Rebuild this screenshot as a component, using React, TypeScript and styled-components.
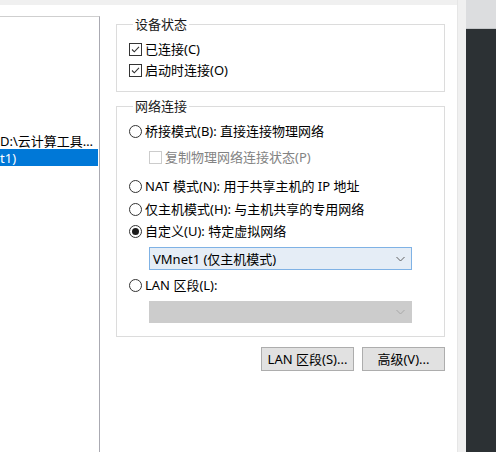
import { FC, ReactNode } from "react"
import styled, { createGlobalStyle } from "styled-components"

const GlobalStyle = createGlobalStyle`
  html, body {
    margin: 0;
    padding: 0;
    background: #ffffff;
  }
  body {
    font-family: "Noto Sans", "Noto Sans CJK SC", sans-serif;
    font-size: 13px;
    line-height: 16px;
    color: #000000;
  }
  * {
    box-sizing: border-box;
  }
`

const Screen = styled.div`
  display: flex;
  width: 496px;
  height: 452px;
  overflow: hidden;
`

const Dialog = styled.div`
  display: flex;
  flex-direction: column;
  width: 457px;
  background: #ffffff;
  border-top: 5px solid #f0f0f0;
`

const Gutter = styled.div`
  width: 9px;
  background: #f0f0f0;
  border-left: 1px solid #e6e6e6;
`

const Desktop = styled.div`
  flex: 1;
  display: flex;
  flex-direction: column;
  background: #2c3134;
`

const DesktopTop = styled.div`
  height: 29px;
  background: #dcdddf;
  border-bottom: 1px solid #c4c6c8;
`

const Body = styled.div`
  flex: 1;
  display: flex;
`

const ListBox = styled.div`
  width: 100px;
  margin-top: 11px;
  padding-top: 116px;
  border-top: 1px solid #cfcfcf;
  border-right: 1px solid #aaaab2;
  overflow: hidden;
`

const ListRow = styled.div<{ $selected?: boolean }>`
  display: flex;
  align-items: center;
  height: ${(p) => (p.$selected ? 17 : 16)}px;
  width: 98px;
  white-space: nowrap;
  overflow: hidden;
  line-height: 14px;
  color: ${(p) => (p.$selected ? "#ffffff" : "#000000")};
  background: ${(p) => (p.$selected ? "#0078d7" : "transparent")};
`

const Settings = styled.div`
  flex: 1;
  display: flex;
  flex-direction: column;
  padding: 11px 12px 0 16px;
`

const Group = styled.fieldset<{ $top?: number; $bottom?: number }>`
  margin: ${(p) => p.$top ?? 0}px 0 0 0;
  padding: 6px 0 ${(p) => p.$bottom ?? 10}px 12px;
  border: 1px solid #dcdcdc;
  min-width: 0;
`

const Legend = styled.legend`
  margin-left: 4px;
  padding: 0 2px;
  line-height: 16px;
  color: #1a1a1a;
`

const Row = styled.div<{ $top?: number; $indent?: number; $disabled?: boolean }>`
  display: flex;
  align-items: center;
  height: 22px;
  margin-top: ${(p) => p.$top ?? 0}px;
  margin-left: ${(p) => p.$indent ?? 0}px;
  color: ${(p) => (p.$disabled ? "#838383" : "#000000")};
  white-space: nowrap;
`

const Box = styled.span<{ $disabled?: boolean }>`
  display: inline-flex;
  width: 13px;
  height: 13px;
  flex: none;
  border: 1px solid ${(p) => (p.$disabled ? "#cccccc" : "#333333")};
  background: #ffffff;
`

const Radio = styled.span<{ $checked?: boolean }>`
  position: relative;
  display: inline-block;
  width: 13px;
  height: 13px;
  flex: none;
  border: 1px solid #333333;
  border-radius: 50%;
  background: #ffffff;

  &::after {
    content: "";
    display: ${(p) => (p.$checked ? "block" : "none")};
    position: absolute;
    top: 2px;
    left: 2px;
    width: 7px;
    height: 7px;
    border-radius: 50%;
    background: #1c1c1c;
  }
`

const Label = styled.span`
  margin-left: 3px;
`

const Select = styled.div<{ $disabled?: boolean; $top?: number }>`
  display: flex;
  align-items: center;
  justify-content: space-between;
  width: 263px;
  height: ${(p) => (p.$disabled ? 22 : 23)}px;
  margin: ${(p) => p.$top ?? 0}px 0 0 20px;
  padding: 0 6px 0 3px;
  background: ${(p) => (p.$disabled ? "#cccccc" : "#e5edf6")};
  border: 1px solid ${(p) => (p.$disabled ? "#cccccc" : "#7fb2e5")};
  color: #000000;
  white-space: nowrap;
`

const Chevron = styled.svg`
  flex: none;
`

const ButtonBar = styled.div`
  display: flex;
  justify-content: flex-end;
  gap: 8px;
  margin-top: 10px;
`

const Button = styled.button<{ $width: number }>`
  width: ${(p) => p.$width}px;
  height: 24px;
  padding: 0;
  font-family: inherit;
  font-size: 13px;
  line-height: 16px;
  color: #000000;
  background: #e1e1e1;
  border: 1px solid #adadad;
`

const CheckBox: FC<{ checked?: boolean; disabled?: boolean }> = ({ checked, disabled }) => (
  <Box $disabled={disabled}>
    {checked && (
      <svg width="11" height="11" viewBox="0 0 11 11">
        <path d="M2 5.5 L4.3 7.8 L9 2.8" fill="none" stroke="#333333" strokeWidth="1.1" />
      </svg>
    )}
  </Box>
)

const Arrow: FC<{ color: string }> = ({ color }) => (
  <Chevron width="9" height="6" viewBox="0 0 9 6">
    <path d="M0.5 1 L4.5 5 L8.5 1" fill="none" stroke={color} strokeWidth="1" />
  </Chevron>
)

const Option: FC<{ children: ReactNode; top?: number; checked?: boolean }> = ({ children, top, checked }) => (
  <Row $top={top}>
    <Radio $checked={checked} />
    <Label>{children}</Label>
  </Row>
)

const App: FC = () => (
  <>
    <GlobalStyle />
    <Screen>
      <Dialog>
        <Body>
          <ListBox>
            <ListRow>D:\云计算工具…</ListRow>
            <ListRow $selected>t1)</ListRow>
          </ListBox>
          <Settings>
            <Group>
              <Legend>设备状态</Legend>
              <Row>
                <CheckBox checked />
                <Label>已连接(C)</Label>
              </Row>
              <Row $top={-1}>
                <CheckBox checked />
                <Label>启动时连接(O)</Label>
              </Row>
            </Group>

            <Group $top={6} $bottom={13}>
              <Legend>网络连接</Legend>
              <Option>桥接模式(B): 直接连接物理网络</Option>
              <Row $top={4} $indent={20} $disabled>
                <CheckBox disabled />
                <Label>复制物理网络连接状态(P)</Label>
              </Row>
              <Option top={7}>NAT 模式(N): 用于共享主机的 IP 地址</Option>
              <Option top={1}>仅主机模式(H): 与主机共享的专用网络</Option>
              <Option checked>自定义(U): 特定虚拟网络</Option>
              <Select $top={5}>
                <span>VMnet1 (仅主机模式)</span>
                <Arrow color="#606060" />
              </Select>
              <Option top={4}>LAN 区段(L):</Option>
              <Select $disabled $top={5}>
                <span />
                <Arrow color="#a8a8a8" />
              </Select>
            </Group>

            <ButtonBar>
              <Button $width={93}>LAN 区段(S)...</Button>
              <Button $width={83}>高级(V)...</Button>
            </ButtonBar>
          </Settings>
        </Body>
      </Dialog>
      <Gutter />
      <Desktop>
        <DesktopTop />
      </Desktop>
    </Screen>
  </>
)

export default App
